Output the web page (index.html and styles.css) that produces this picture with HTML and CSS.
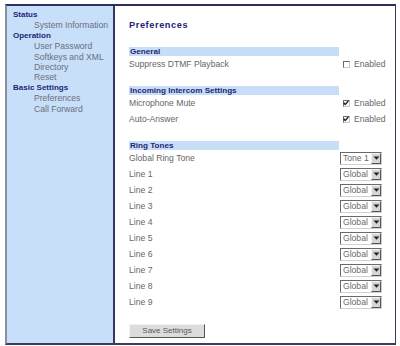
FILE: index.html
```html
<!DOCTYPE html>
<html>
<head>
<meta charset="utf-8">
<link rel="stylesheet" href="styles.css">
</head>
<body>
<div class="frame">
  <div class="sidebar">
    <div class="nav-head">Status</div>
    <div class="nav-item">System Information</div>
    <div class="nav-head">Operation</div>
    <div class="nav-item">User Password</div>
    <div class="nav-item">Softkeys and XML</div>
    <div class="nav-item">Directory</div>
    <div class="nav-item">Reset</div>
    <div class="nav-head">Basic Settings</div>
    <div class="nav-item">Preferences</div>
    <div class="nav-item">Call Forward</div>
  </div>
  <div class="main">
    <div class="title">Preferences</div>

    <div class="section">
      <div class="bar">General</div>
      <div class="row"><span class="label">Suppress DTMF Playback</span><span class="chk-wrap"><span class="chk"></span><span class="en">Enabled</span></span></div>
    </div>

    <div class="section">
      <div class="bar">Incoming Intercom Settings</div>
      <div class="row"><span class="label">Microphone Mute</span><span class="chk-wrap"><span class="chk"><svg viewBox="0 0 7 7" width="7" height="7"><path d="M0.8 2.6 L2.6 4.6 L6.2 0.6" fill="none" stroke="#222" stroke-width="1.6"/></svg></span><span class="en">Enabled</span></span></div>
      <div class="row"><span class="label">Auto-Answer</span><span class="chk-wrap"><span class="chk"><svg viewBox="0 0 7 7" width="7" height="7"><path d="M0.8 2.6 L2.6 4.6 L6.2 0.6" fill="none" stroke="#222" stroke-width="1.6"/></svg></span><span class="en">Enabled</span></span></div>
    </div>

    <div class="section">
      <div class="bar">Ring Tones</div>
      <div class="row"><span class="label">Global Ring Tone</span><span class="sel"><span class="sel-text">Tone 1</span><span class="arrow"><svg viewBox="0 0 7 4" width="7" height="4"><path d="M0.5 0.5 L6.5 0.5 L3.5 3.8 Z" fill="#222"/></svg></span></span></div>
      <div class="row"><span class="label">Line 1</span><span class="sel"><span class="sel-text">Global</span><span class="arrow"><svg viewBox="0 0 7 4" width="7" height="4"><path d="M0.5 0.5 L6.5 0.5 L3.5 3.8 Z" fill="#222"/></svg></span></span></div>
      <div class="row"><span class="label">Line 2</span><span class="sel"><span class="sel-text">Global</span><span class="arrow"><svg viewBox="0 0 7 4" width="7" height="4"><path d="M0.5 0.5 L6.5 0.5 L3.5 3.8 Z" fill="#222"/></svg></span></span></div>
      <div class="row"><span class="label">Line 3</span><span class="sel"><span class="sel-text">Global</span><span class="arrow"><svg viewBox="0 0 7 4" width="7" height="4"><path d="M0.5 0.5 L6.5 0.5 L3.5 3.8 Z" fill="#222"/></svg></span></span></div>
      <div class="row"><span class="label">Line 4</span><span class="sel"><span class="sel-text">Global</span><span class="arrow"><svg viewBox="0 0 7 4" width="7" height="4"><path d="M0.5 0.5 L6.5 0.5 L3.5 3.8 Z" fill="#222"/></svg></span></span></div>
      <div class="row"><span class="label">Line 5</span><span class="sel"><span class="sel-text">Global</span><span class="arrow"><svg viewBox="0 0 7 4" width="7" height="4"><path d="M0.5 0.5 L6.5 0.5 L3.5 3.8 Z" fill="#222"/></svg></span></span></div>
      <div class="row"><span class="label">Line 6</span><span class="sel"><span class="sel-text">Global</span><span class="arrow"><svg viewBox="0 0 7 4" width="7" height="4"><path d="M0.5 0.5 L6.5 0.5 L3.5 3.8 Z" fill="#222"/></svg></span></span></div>
      <div class="row"><span class="label">Line 7</span><span class="sel"><span class="sel-text">Global</span><span class="arrow"><svg viewBox="0 0 7 4" width="7" height="4"><path d="M0.5 0.5 L6.5 0.5 L3.5 3.8 Z" fill="#222"/></svg></span></span></div>
      <div class="row"><span class="label">Line 8</span><span class="sel"><span class="sel-text">Global</span><span class="arrow"><svg viewBox="0 0 7 4" width="7" height="4"><path d="M0.5 0.5 L6.5 0.5 L3.5 3.8 Z" fill="#222"/></svg></span></span></div>
      <div class="row"><span class="label">Line 9</span><span class="sel"><span class="sel-text">Global</span><span class="arrow"><svg viewBox="0 0 7 4" width="7" height="4"><path d="M0.5 0.5 L6.5 0.5 L3.5 3.8 Z" fill="#222"/></svg></span></span></div>
    </div>

    <div class="btn">Save Settings</div>
  </div>
</div>
</body>
</html>
```

FILE: styles.css
```css
html, body {
  margin: 0;
  padding: 0;
  background: #ffffff;
}
body {
  font-family: "Liberation Sans", Arial, sans-serif;
  font-size: 8.6px;
  color: #666666;
}
.frame {
  margin: 4px 0 0 5px;
  width: 388px;
  height: 337px;
  display: flex;
  border-top: 2px solid #2e2f5c;
  border-left: 2px solid #8c8e9c;
  border-bottom: 2px solid #3a3b58;
  border-right: 1px solid #3a3b58;
}
.sidebar {
  width: 108px;
  background: #c7dff8;
  border-right: 2px solid #36375e;
  padding: 4px 0 0 6px;
  box-sizing: border-box;
}
.nav-head {
  font-weight: bold;
  font-size: 8px;
  line-height: 10.4px;
  color: #23257a;
}
.nav-item {
  padding-left: 21px;
  line-height: 10.4px;
  color: #6a7080;
}
.main {
  flex: 1;
  padding: 13px 0 0 14px;
  box-sizing: border-box;
}
.title {
  font-weight: bold;
  font-size: 9.2px;
  letter-spacing: 0.6px;
  line-height: 12px;
  color: #23257a;
  margin-bottom: 16px;
}
.section {
  width: 257px;
  margin-bottom: 14px;
}
.bar {
  width: 209px;
  height: 9px;
  line-height: 9px;
  background: #c8def6;
  font-weight: bold;
  font-size: 8.1px;
  color: #23257a;
  padding-left: 1px;
}
.row {
  height: 16px;
  display: flex;
  align-items: center;
  justify-content: space-between;
}
.label {
  color: #666666;
}
.chk-wrap {
  display: flex;
  align-items: center;
  width: 43px;
}
.chk {
  width: 7px;
  height: 7px;
  box-sizing: border-box;
  border: 1px solid;
  border-color: #6a6a6a #c8c8c8 #c8c8c8 #6a6a6a;
  background: #fff;
  display: flex;
  margin-right: 4px;
}
.chk svg {
  display: block;
  margin: -1px 0 0 -1px;
}
.en {
  color: #666666;
}
.sel {
  width: 42px;
  height: 13px;
  box-sizing: border-box;
  border: 1px solid;
  border-color: #6a6a6a #d0d0d0 #d0d0d0 #6a6a6a;
  display: flex;
  align-items: center;
  margin-right: 4px;
  background: #fff;
}
.sel-text {
  flex: 1;
  padding-left: 2px;
  color: #6a6a6a;
  line-height: 11px;
}
.arrow {
  width: 10px;
  height: 11px;
  box-sizing: border-box;
  background: #d6d6d6;
  border: 1px solid;
  border-color: #f4f4f4 #555 #555 #f4f4f4;
  display: flex;
  align-items: center;
  justify-content: center;
}
.arrow svg {
  display: block;
}
.btn {
  margin-top: 1px;
  width: 76px;
  height: 14px;
  box-sizing: border-box;
  background: #dcdcdc;
  border: 1px solid;
  border-color: #f2f2f2 #555 #555 #f2f2f2;
  text-align: center;
  line-height: 12px;
  font-size: 8px;
  color: #5a5a5a;
}
```
